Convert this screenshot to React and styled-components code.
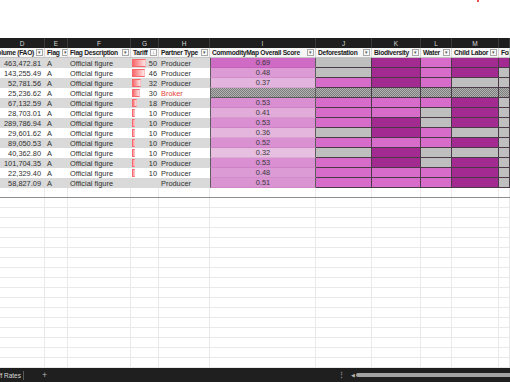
import React from 'react';
import styled, {createGlobalStyle} from 'styled-components';

const GlobalStyle = createGlobalStyle`
    html, body {
        margin: 0;
        padding: 0;
        background: #fff;
    }
    body {
        font-family: "Liberation Sans", Arial, sans-serif;
    }
`;

const COLS = '45px 23px 63px 28px 51px 106px 56px 49px 31px 47px 1fr';

const Sheet = styled.div`
    display: flex;
    flex-direction: column;
    width: 510px;
    height: 382px;
    overflow: hidden;
`;

const TopBand = styled.div`
    position: relative;
    height: 38px;
    flex: none;
    background: #fff;
`;

const Notice = styled.span`
    position: absolute;
    top: 0;
    left: 477px;
    width: 2px;
    height: 2px;
    background: #f05050;
`;

const Grid = styled.div`
    flex: 1;
    overflow: hidden;
`;

const Row = styled.div`
    display: grid;
    grid-template-columns: ${COLS};
    height: 10px;
`;

const LetterRow = styled(Row)`
    background: #1e1e1e;
`;

const Letter = styled.div`
    display: flex;
    align-items: center;
    justify-content: center;
    color: #d6d6d6;
    font-size: 6.5px;
    border-right: 1px solid #3a3a3a;
`;

const HeaderRow = styled(Row)`
    background: #f6f6f6;
    box-sizing: border-box;
    border-bottom: 1px solid #c4c4c4;
`;

const HeadCell = styled.div`
    display: flex;
    align-items: center;
    justify-content: ${p => (p.$clipLeft ? 'flex-end' : 'flex-start')};
    gap: 2px;
    padding: 0 1px 0 2px;
    overflow: hidden;
    border-right: 1px solid #d6d6d6;
    color: #1a1a1a;
    font-weight: 700;
    font-size: 6.7px;
    letter-spacing: -0.28px;
    white-space: nowrap;
`;

const HeadLabel = styled.span`
    flex: none;
`;

const FilterBtn = styled.span`
    flex: none;
    margin-left: auto;
    width: 5px;
    height: 5px;
    display: flex;
    align-items: center;
    justify-content: center;
    border: 1px solid #a8a8a8;
    background: #f9f9f9;
    color: #555;
    font-size: 5px;
    font-weight: 400;
    letter-spacing: 0;
    line-height: 1;
`;

const DataRow = styled(Row)`
    background: ${p => (p.$band ? '#d9d9d9' : '#fff')};
    color: #2f2f2f;
    font-size: 7.4px;
`;

const Cell = styled.div`
    display: flex;
    align-items: center;
    justify-content: ${p => p.$align || 'flex-start'};
    padding: 0 ${p => (p.$align === 'flex-end' ? '4px' : '2px')} 0 2px;
    overflow: hidden;
    white-space: nowrap;
    color: ${p => p.$tone || 'inherit'};
`;

const TariffCell = styled.div`
    display: flex;
    align-items: center;
    padding: 0 2px 0 1px;
`;

const TariffBar = styled.span`
    flex: none;
    height: 8px;
    box-sizing: border-box;
    border: 1px solid #f7686c;
    border-right-color: #fbbfc1;
    background: linear-gradient(90deg, #f7696b 0%, #fde3e4 100%);
`;

const TariffValue = styled.span`
    margin-left: auto;
`;

const ScoreCell = styled.div`
    display: flex;
    align-items: center;
    justify-content: center;
    box-sizing: border-box;
    border-left: 1px solid #5c5c5c;
    border-right: 1px solid #5c5c5c;
    border-bottom: 1px solid rgba(120, 40, 110, 0.12);
    background: ${p => p.$bg};
    color: #383838;
`;

// fine grey checker used where a partner has no assessment
const HATCH = 'conic-gradient(#7c7c7c 25%, #b2b2b2 0 50%, #7c7c7c 0 75%, #b2b2b2 0) 0 0 / 2px 2px';

const RISK = {
    low: '#bfbfbf',
    mid: '#d86ccb',
    high: '#a22a90',
    na: HATCH,
};

const RiskCell = styled.div`
    box-sizing: border-box;
    border-right: 1px solid #4a3a48;
    border-bottom: 1px solid #4a3a48;
    background: ${p => RISK[p.$level]};
`;

const HatchCell = styled.div`
    box-sizing: border-box;
    border-left: 1px solid #5c5c5c;
    border-right: 1px solid #5c5c5c;
    border-bottom: 1px solid #5c5c5c;
    background: ${HATCH};
`;

const EmptyRow = styled(Row)`
    box-sizing: border-box;
    border-bottom: 1px solid ${p => (p.$edge ? '#8e8e8e' : '#e9e9e9')};
`;

const EmptyCell = styled.div`
    border-right: 1px solid #e9e9e9;
`;

const BottomBar = styled.div`
    flex: none;
    height: 14px;
    display: flex;
    align-items: center;
    background: #1f1f1f;
    color: #d8d8d8;
    font-size: 6.5px;
`;

const Tab = styled.div`
    width: 21px;
    display: flex;
    justify-content: flex-end;
    overflow: hidden;
    white-space: nowrap;
`;

const TabDivider = styled.span`
    width: 1px;
    height: 9px;
    margin-left: 2px;
    background: #5a5a5a;
`;

const AddSheet = styled.span`
    margin-left: 18px;
    color: #b0b0b0;
    font-size: 9px;
    line-height: 1;
`;

const Dots = styled.span`
    margin-left: auto;
    color: #8a8a8a;
    font-size: 7px;
    font-weight: 700;
`;

const ScrollArrow = styled.span`
    margin-left: 6px;
    color: #b8b8b8;
    font-size: 5px;
`;

const ScrollThumb = styled.div`
    width: 154px;
    height: 4px;
    margin-left: 1px;
    border-radius: 2px 0 0 2px;
    background: #a2a2a2;
`;

const letters = ['D', 'E', 'F', 'G', 'H', 'I', 'J', 'K', 'L', 'M', ''];

const headers = [
    {label: 'Volume (FAO)', clipLeft: true},
    {label: 'Flag'},
    {label: 'Flag Description'},
    {label: 'Tariff', sort: true},
    {label: 'Partner Type'},
    {label: 'CommodityMap Overall Score'},
    {label: 'Deforestation'},
    {label: 'Biodiversity'},
    {label: 'Water'},
    {label: 'Child Labor'},
    {label: 'Forced Labor', bare: true},
];

// level per row: deforestation, biodiversity, water, child labor, forced labor
const rows = [
    {vol: '463,472.81', tariff: 50, type: 'Producer', score: 0.69, risk: ['low', 'high', 'mid', 'high', 'high']},
    {vol: '143,255.49', tariff: 46, type: 'Producer', score: 0.48, risk: ['low', 'high', 'mid', 'high', 'low']},
    {vol: '52,781.56', tariff: 32, type: 'Producer', score: 0.37, risk: ['mid', 'high', 'mid', 'low', 'low']},
    {vol: '25,236.62', tariff: 30, type: 'Broker', score: null, risk: ['na', 'na', 'na', 'na', 'na']},
    {vol: '67,132.59', tariff: 18, type: 'Producer', score: 0.53, risk: ['mid', 'mid', 'mid', 'high', 'low']},
    {vol: '28,703.01', tariff: 10, type: 'Producer', score: 0.41, risk: ['mid', 'mid', 'low', 'high', 'low']},
    {vol: '289,786.94', tariff: 10, type: 'Producer', score: 0.53, risk: ['mid', 'high', 'low', 'high', 'low']},
    {vol: '29,601.62', tariff: 10, type: 'Producer', score: 0.36, risk: ['low', 'high', 'mid', 'low', 'low']},
    {vol: '89,050.53', tariff: 10, type: 'Producer', score: 0.52, risk: ['mid', 'mid', 'mid', 'high', 'low']},
    {vol: '40,362.80', tariff: 10, type: 'Producer', score: 0.32, risk: ['low', 'high', 'low', 'low', 'low']},
    {vol: '101,704.35', tariff: 10, type: 'Producer', score: 0.53, risk: ['mid', 'high', 'low', 'high', 'low']},
    {vol: '22,329.40', tariff: 10, type: 'Producer', score: 0.48, risk: ['mid', 'mid', 'mid', 'high', 'low']},
    {vol: '58,827.09', tariff: null, type: 'Producer', score: 0.51, risk: ['mid', 'mid', 'mid', 'high', 'low']},
];

// colour scale for the overall score, light lilac to orchid
const scoreColor = v => {
    const lo = [232, 196, 226];
    const hi = [206, 104, 196];
    const t = Math.max(0, Math.min(1, (v - 0.3) / 0.4));
    const c = lo.map((l, i) => Math.round(l + (hi[i] - l) * t));
    return `rgb(${c.join(',')})`;
};

const App = () => (
    <Sheet>
        <GlobalStyle/>
        <TopBand>
            <Notice/>
        </TopBand>
        <Grid>
            <LetterRow>
                {letters.map((l, i) => <Letter key={i}>{l}</Letter>)}
            </LetterRow>
            <HeaderRow>
                {headers.map(h => (
                    <HeadCell key={h.label} $clipLeft={h.clipLeft}>
                        <HeadLabel>{h.label}</HeadLabel>
                        {!h.bare && <FilterBtn>{h.sort ? '↓' : '▾'}</FilterBtn>}
                    </HeadCell>
                ))}
            </HeaderRow>
            {rows.map((r, i) => (
                <DataRow key={r.vol} $band={i % 2 === 0}>
                    <Cell $align="flex-end">{r.vol}</Cell>
                    <Cell>A</Cell>
                    <Cell>Official figure</Cell>
                    <TariffCell>
                        {r.tariff != null && <TariffBar style={{width: `${(r.tariff / 50) * 14}px`}}/>}
                        <TariffValue>{r.tariff}</TariffValue>
                    </TariffCell>
                    <Cell $tone={r.type === 'Broker' ? '#e2433c' : undefined}>{r.type}</Cell>
                    {r.score == null
                        ? <HatchCell/>
                        : <ScoreCell $bg={scoreColor(r.score)}>{r.score.toFixed(2)}</ScoreCell>}
                    {r.risk.map((lv, j) => <RiskCell key={j} $level={lv}/>)}
                </DataRow>
            ))}
            {Array.from({length: 18}, (_, i) => (
                <EmptyRow key={i} $edge={i === 0}>
                    {letters.map((_, j) => <EmptyCell key={j}/>)}
                </EmptyRow>
            ))}
        </Grid>
        <BottomBar>
            <Tab>Tariff Rates</Tab>
            <TabDivider/>
            <AddSheet>+</AddSheet>
            <Dots>⋮</Dots>
            <ScrollArrow>◀</ScrollArrow>
            <ScrollThumb/>
        </BottomBar>
    </Sheet>
);

export default App;
